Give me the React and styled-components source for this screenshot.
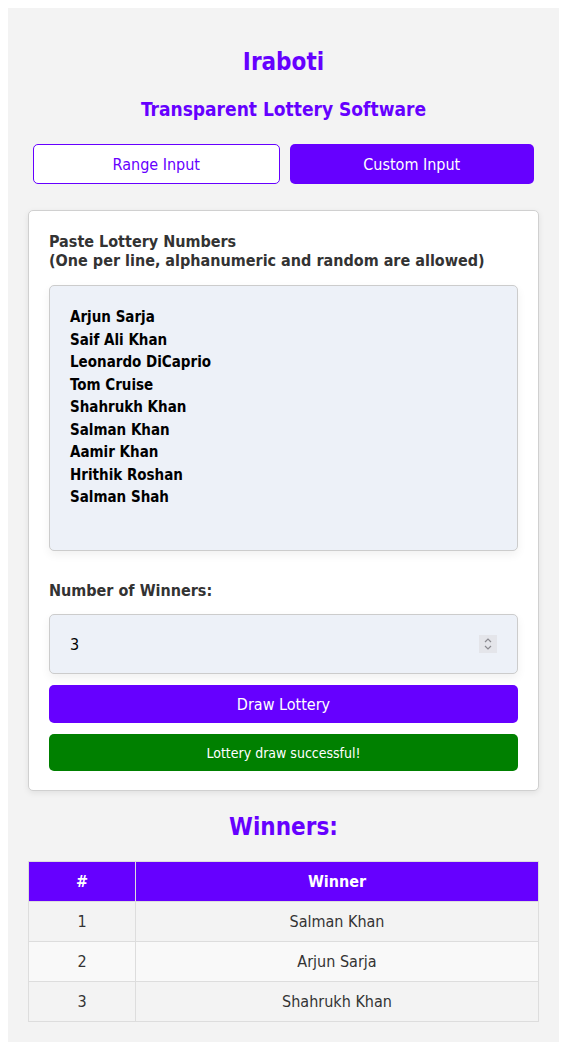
import React, { useState } from "react";
import styled, { createGlobalStyle } from "styled-components";

const Global = createGlobalStyle`
  body {
    margin: 8px;
    background: #ffffff;
    font-family: Tahoma, "DejaVu Sans Condensed", "DejaVu Sans", sans-serif;
    font-stretch: condensed;
  }
  * { font-stretch: condensed; }
`;

const PURPLE = "#6600ff";

const Container = styled.div`
  background: #f3f3f3;
  padding: 20px 20px 20px;
  box-sizing: border-box;
  min-height: 1034px;
`;

const Title = styled.h1`
  margin: 20px 0 0;
  font-size: 24px;
  line-height: 29px;
  font-weight: bold;
  color: ${PURPLE};
  text-align: center;
`;

const Subtitle = styled.h2`
  margin: 20px 0 0;
  font-size: 19px;
  line-height: 24px;
  font-weight: bold;
  color: ${PURPLE};
  text-align: center;
`;

const ModeRow = styled.div`
  display: flex;
  margin-top: 18px;
`;

const ModeButton = styled.button`
  flex: 1;
  margin: 5px;
  border-radius: 5px;
  font-family: inherit;
  font-size: 16px;
  cursor: pointer;
  padding: 0;
  box-sizing: content-box;
  border: ${(p) => (p.$active ? "none" : `1px solid ${PURPLE}`)};
  height: ${(p) => (p.$active ? "40px" : "38px")};
  background: ${(p) => (p.$active ? PURPLE : "#ffffff")};
  color: ${(p) => (p.$active ? "#ffffff" : PURPLE)};
`;

const Card = styled.div`
  margin-top: 21px;
  background: #ffffff;
  border: 1px solid #d0d0d0;
  border-radius: 5px;
  padding: 21px 20px 19px;
  box-shadow: 0 2px 6px rgba(0, 0, 0, 0.08);
  display: flex;
  flex-direction: column;
`;

const Label = styled.label`
  display: block;
  font-size: 16px;
  line-height: 19px;
  font-weight: bold;
  color: #333333;
  margin-top: ${(p) => p.$top || 0}px;
`;

const TextArea = styled.textarea`
  margin-top: 15px;
  display: block;
  width: 100%;
  box-sizing: border-box;
  height: 266px;
  padding: 20px;
  border: 1px solid #cccccc;
  border-radius: 5px;
  background: #edf1f8;
  font-family: inherit;
  font-size: 15px;
  line-height: 22.5px;
  font-weight: bold;
  color: #000000;
  resize: none;
  box-shadow: 0 4px 10px rgba(0, 0, 0, 0.06);
  outline: none;
`;

const InputWrap = styled.div`
  position: relative;
  margin-top: 14px;
`;

const NumberInput = styled.input`
  display: block;
  width: 100%;
  box-sizing: border-box;
  height: 60px;
  padding: 0 20px;
  border: 1px solid #cccccc;
  border-radius: 5px;
  background: #edf1f8;
  font-family: inherit;
  font-size: 16px;
  color: #000000;
  box-shadow: 0 4px 10px rgba(0, 0, 0, 0.06);
  outline: none;
  -moz-appearance: textfield;
  &::-webkit-inner-spin-button,
  &::-webkit-outer-spin-button {
    -webkit-appearance: none;
    margin: 0;
  }
`;

const Spinner = styled.div`
  position: absolute;
  right: 21px;
  top: 21px;
  width: 18px;
  height: 18px;
  background: #e4e5ea;
  display: flex;
  align-items: center;
  justify-content: center;
  pointer-events: none;
`;

const DrawButton = styled.button`
  margin-top: 11px;
  height: 38px;
  border: none;
  border-radius: 5px;
  background: ${PURPLE};
  color: #ffffff;
  font-family: inherit;
  font-size: 16px;
  cursor: pointer;
`;

const Success = styled.div`
  margin-top: 11px;
  height: 37px;
  border-radius: 5px;
  background: #008000;
  color: #ffffff;
  font-size: 14px;
  display: flex;
  align-items: center;
  justify-content: center;
`;

const WinnersTitle = styled.h2`
  margin: 22px 0 19px;
  font-size: 24px;
  line-height: 29px;
  font-weight: bold;
  color: ${PURPLE};
  text-align: center;
`;

const Table = styled.table`
  width: 100%;
  border-collapse: collapse;
  font-size: 16px;
  color: #333333;
`;

const Th = styled.th`
  background: ${PURPLE};
  color: #ffffff;
  font-weight: bold;
  border: 1px solid #dddddd;
  height: 40px;
  padding: 0 10px;
  box-sizing: border-box;
  text-align: center;
  width: ${(p) => p.$w || "auto"};
`;

const Tr = styled.tr`
  background: ${(p) => (p.$even ? "#f9f9f9" : "transparent")};
`;

const Td = styled.td`
  border: 1px solid #dddddd;
  height: 40px;
  padding: 0 10px;
  box-sizing: border-box;
  text-align: center;
`;

const names = [
  "Arjun Sarja",
  "Saif Ali Khan",
  "Leonardo DiCaprio",
  "Tom Cruise",
  "Shahrukh Khan",
  "Salman Khan",
  "Aamir Khan",
  "Hrithik Roshan",
  "Salman Shah",
];

const winners = ["Salman Khan", "Arjun Sarja", "Shahrukh Khan"];

export default function App() {
  const [text, setText] = useState(names.join("\n"));
  const [count, setCount] = useState(3);
  return (
    <>
      <Global />
      <Container>
        <Title>Iraboti</Title>
        <Subtitle>Transparent Lottery Software</Subtitle>
        <ModeRow>
          <ModeButton>Range Input</ModeButton>
          <ModeButton $active>Custom Input</ModeButton>
        </ModeRow>
        <Card>
          <Label>
            Paste Lottery Numbers
            <br />
            (One per line, alphanumeric and random are allowed)
          </Label>
          <TextArea value={text} onChange={(e) => setText(e.target.value)} />
          <Label $top={30}>Number of Winners:</Label>
          <InputWrap>
            <NumberInput
              type="number"
              value={count}
              onChange={(e) => setCount(e.target.value)}
            />
            <Spinner>
              <svg width="10" height="14" viewBox="0 0 10 14" fill="none">
                <path d="M2 5 L5 2 L8 5" stroke="#8a8a90" strokeWidth="1.2" />
                <path d="M2 9 L5 12 L8 9" stroke="#8a8a90" strokeWidth="1.2" />
              </svg>
            </Spinner>
          </InputWrap>
          <DrawButton>Draw Lottery</DrawButton>
          <Success>Lottery draw successful!</Success>
        </Card>
        <WinnersTitle>Winners:</WinnersTitle>
        <Table>
          <thead>
            <tr>
              <Th $w="107px">#</Th>
              <Th>Winner</Th>
            </tr>
          </thead>
          <tbody>
            {winners.map((w, i) => (
              <Tr key={w} $even={i % 2 === 1}>
                <Td>{i + 1}</Td>
                <Td>{w}</Td>
              </Tr>
            ))}
          </tbody>
        </Table>
      </Container>
    </>
  );
}
